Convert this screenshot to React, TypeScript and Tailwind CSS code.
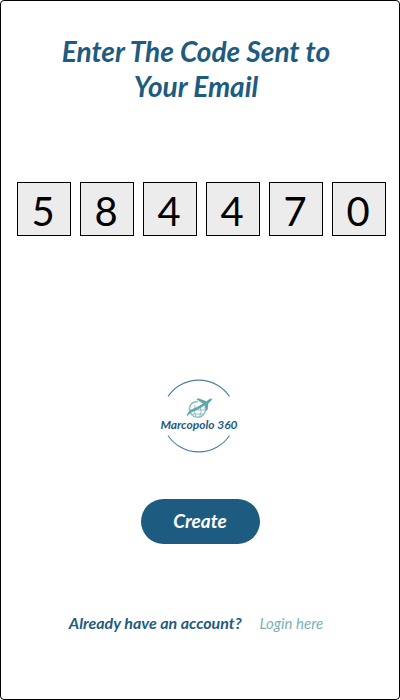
import { useState } from "react";

const initialCode = ["5", "8", "4", "4", "7", "0"];

function Logo() {
  return (
    <svg
      role="img"
      aria-label="Marcopolo 360"
      className="block h-[76px] w-[80px]"
      viewBox="0 0 80 76"
      fill="none"
    >
      <g stroke="#4d80a0" strokeWidth="1.1">
        <path d="M8 18.500 A37 37 0 0 1 69.500 18.500" />
        <path d="M8 57.500 A37 37 0 0 0 69.500 57.500" />
      </g>
      <g stroke="#8fc0c2" strokeWidth="1">
        <path
          d="M31 26.500 A8 8 0 1 0 45 28.500 M31 26.500 A8 8 0 0 1 38 23.500"
          strokeWidth="1.500"
        />
        <path d="M35 27 Q33.500 34 36 39M40 28 Q42.500 34 39.500 39M30 32h15M31.500 36h12" />
      </g>
      <path
        d="M27 38.500C26.500 34 31 31.500 36 29.500L43 25.800L36.500 21.200L38.300 20.200L46.500 23.200C49 21.200 51 20.200 52 20.700C52.500 21.600 50.500 23.700 48.500 25.200L47.500 32L46 33L44.800 27.600L38 31.500C33 33.700 29.500 35 27 38.500Z"
        fill="#62a6aa"
      />
      <text
        x="39"
        y="51"
        textAnchor="middle"
        fill="#1d5b82"
        className="font-['Lato','Liberation_Sans',sans-serif] text-[12px] font-bold italic"
      >
        Marcopolo 360
      </text>
    </svg>
  );
}

export default function App() {
  const [code, setCode] = useState(initialCode);

  const updateDigit = (index: number, value: string) =>
    setCode(code.map((digit, i) => (i === index ? value : digit)));

  return (
    <main className="flex min-h-screen flex-col items-center rounded border border-black bg-white px-3 pt-[33px] pb-16 font-['Lato','Liberation_Sans',sans-serif]">
      <h1 className="max-w-[308px] pr-2 text-center text-[28px] leading-[35px] font-bold text-[#1e5b80] italic">
        Enter The Code Sent to Your Email
      </h1>

      <form
        className="flex w-full flex-col items-center"
        onSubmit={(event) => event.preventDefault()}
      >
        <div className="mt-[78px] flex justify-center gap-[9px] pl-0.5">
          {code.map((digit, index) => (
            <input
              key={index}
              type="text"
              inputMode="numeric"
              maxLength={1}
              aria-label={`Digit ${index + 1}`}
              value={digit}
              onChange={(event) => updateDigit(index, event.target.value)}
              className="h-[54px] w-[54px] border border-black bg-[#ececec] pt-1 pr-px text-center text-[40px] leading-[48px] text-black"
            />
          ))}
        </div>

        <div className="mt-[142px]">
          <Logo />
        </div>

        <button
          type="submit"
          className="mt-[45px] h-[45px] w-[119px] rounded-full bg-[#1e5b80] text-[19px] font-bold text-white italic"
        >
          Create
        </button>
      </form>

      <p className="mt-[67px] flex items-baseline gap-[18px] pr-2 leading-6">
        <span className="text-[16px] font-bold text-[#1e5b80] italic">
          Already have an account?
        </span>
        <a href="#login" className="text-[15px] text-[#78b3b6] italic">
          Login here
        </a>
      </p>
    </main>
  );
}
